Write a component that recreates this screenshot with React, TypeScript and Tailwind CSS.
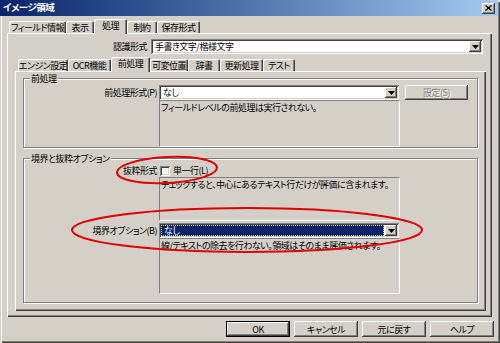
import React from "react";

const RAISED =
  "shadow-[inset_-1px_-1px_0_#404040,inset_1px_1px_0_#ffffff,inset_-2px_-2px_0_#808080]";
const SUNKEN =
  "shadow-[inset_1px_1px_0_#808080,inset_-1px_-1px_0_#ffffff,inset_2px_2px_0_#404040,inset_-2px_-2px_0_#d4d0c8]";

function DropBtn() {
  return (
    <div
      className={`w-[12px] h-[11px] shrink-0 bg-[#d4d0c8] flex items-center justify-center ${RAISED}`}
    >
      <svg width="7" height="4" viewBox="0 0 7 4">
        <path d="M0 0h7L3.5 4z" fill="#000" />
      </svg>
    </div>
  );
}

function Combo({
  text,
  cls,
  selected,
}: {
  text: string;
  cls: string;
  selected?: boolean;
}) {
  return (
    <div className={`h-[15px] shrink-0 flex items-stretch p-[2px] bg-white ${SUNKEN} ${cls}`}>
      {selected ? (
        <div className="flex-1 bg-[#0a246a] text-white flex items-center pl-[2px] mr-[1px] border border-dotted border-[#c8c0a0]">
          {text}
        </div>
      ) : (
        <div className="flex-1 flex items-center pl-[2px] whitespace-nowrap">{text}</div>
      )}
      <DropBtn />
    </div>
  );
}

function Tab({ label, cls, sel }: { label: string; cls: string; sel?: boolean }) {
  return sel ? (
    <div
      className={`h-[15px] -mb-px relative z-10 bg-[#d4d0c8] rounded-t-[2px] flex items-start justify-center pt-[2px] whitespace-nowrap shadow-[inset_1px_1px_0_#ffffff,inset_-1px_0_0_#404040,inset_-2px_0_0_#808080] ${cls}`}
    >
      {label}
    </div>
  ) : (
    <div
      className={`h-[12px] bg-[#d4d0c8] rounded-t-[2px] flex items-center justify-center whitespace-nowrap shadow-[inset_1px_1px_0_#ffffff,inset_-1px_0_0_#404040,inset_-2px_0_0_#808080] ${cls}`}
    >
      {label}
    </div>
  );
}

function Group({ title, children, cls }: { title: string; children: React.ReactNode; cls?: string }) {
  return (
    <div
      className={`border border-[#808080] shadow-[inset_1px_1px_0_#ffffff,1px_1px_0_#ffffff] ${cls ?? ""}`}
    >
      <div className="-mt-[6px] ml-[6px] w-fit px-[1px] h-[11px] leading-[11px] bg-[#d4d0c8] whitespace-nowrap">
        {title}
      </div>
      {children}
    </div>
  );
}

function TextBox({ text, cls }: { text: string; cls: string }) {
  return (
    <div
      className={`ml-[135px] w-[241px] border border-t-[#808080] border-l-[#808080] border-b-white border-r-white pl-[1px] pt-[1px] leading-[11px] whitespace-nowrap ${cls}`}
    >
      {text}
    </div>
  );
}

function Btn({ label, cls }: { label: string; cls?: string }) {
  return (
    <div
      className={`w-[64px] h-[16px] bg-[#d4d0c8] flex items-center justify-center ${RAISED} ${cls ?? ""}`}
    >
      {label}
    </div>
  );
}

export default function App() {
  return (
    <div className="w-[500px] h-[343px] relative overflow-hidden bg-[#d4d0c8] text-black text-[9px] leading-none font-['Noto_Sans_CJK_JP',sans-serif] [font-feature-settings:'palt'] tracking-[-0.5px] flex flex-col shadow-[inset_1px_1px_0_#d4d0c8,inset_2px_2px_0_#ffffff,inset_-1px_-1px_0_#404040,inset_-2px_-2px_0_#808080]">
      {/* title bar */}
      <div className="h-[16px] mr-[2px] shrink-0 bg-linear-to-r from-[#0a246a] to-[#a6caf0] flex items-center justify-between pl-[3px] pr-[3px]">
        <span className="text-white font-bold text-[9.5px]">イメージ領域</span>
        <div className={`w-[13px] h-[11px] bg-[#d4d0c8] flex items-center justify-center ${RAISED}`}>
          <svg width="7" height="6" viewBox="0 0 7 6">
            <path d="M0.5 0.5L6.5 5.5M6.5 0.5L0.5 5.5" stroke="#000" strokeWidth="1.4" />
          </svg>
        </div>
      </div>

      {/* outer tabs */}
      <div className="mt-[3px] ml-[9px] h-[14px] flex items-end shrink-0">
        <Tab label="フィールド情報" cls="w-[57px]" />
        <Tab label="表示" cls="w-[28px]" />
        <Tab label="処理" cls="w-[33px]" sel />
        <Tab label="制約" cls="w-[30px]" />
        <Tab label="保存形式" cls="w-[43px]" />
      </div>

      {/* outer panel */}
      <div className="ml-[7px] w-[485px] h-[284px] shrink-0 pt-[6px] pl-[8px] shadow-[inset_1px_1px_0_#ffffff,inset_-1px_-1px_0_#404040,inset_-2px_-2px_0_#808080]">
        <div className="flex items-center h-[15px]">
          <div className="w-[136px] text-right pr-[4px]">認識形式</div>
          <Combo text="手書き文字/楷様文字" cls="w-[332px]" />
        </div>

        {/* inner tabs */}
        <div className="mt-[3px] ml-[3px] h-[14px] flex items-end">
          <Tab label="エンジン設定" cls="w-[50px]" />
          <Tab label="OCR機能" cls="w-[43px]" />
          <Tab label="前処理" cls="w-[39px]" sel />
          <Tab label="可変位置" cls="w-[38px]" />
          <Tab label="辞書" cls="w-[32px]" />
          <Tab label="更新処理" cls="w-[43px]" />
          <Tab label="テスト" cls="w-[32px]" />
        </div>

        {/* inner panel */}
        <div className="w-[471px] h-[240px] pt-[7px] pl-[8px] shadow-[inset_1px_1px_0_#ffffff,inset_-1px_-1px_0_#404040,inset_-2px_-2px_0_#808080]">
          <Group title="前処理" cls="w-[455px]">
            <div className="mt-[1px] flex items-center h-[15px]">
              <div className="w-[135px] text-right pr-[2px] whitespace-nowrap">前処理形式(P)</div>
              <Combo text="なし" cls="w-[240px]" />
              <div className={`ml-[6px] w-[63px] h-[15px] bg-[#d4d0c8] flex items-center justify-center text-[#808080] [text-shadow:1px_1px_0_#ffffff] ${RAISED}`}>
                設定(S)
              </div>
            </div>
            <TextBox text="フィールドレベルの前処理は実行されない。" cls="h-[47px]" />
          </Group>

          <Group title="境界と抜粋オプション" cls="w-[455px] mt-[10px] pb-[8px]">
            <div className="flex items-center h-[13px]">
              <div className="w-[135px] text-right pr-[2px]">抜粋形式</div>
              <div className={`ml-[1px] w-[10px] h-[10px] bg-white ${SUNKEN}`} />
              <div className="ml-[3px]">単一行(L)</div>
            </div>
            <TextBox text="チェックすると、中心にあるテキスト行だけが評価に含まれます。" cls="h-[44px]" />
            <div className="mt-[2px] flex items-center h-[15px]">
              <div className="w-[135px] text-right pr-[2px] whitespace-nowrap">境界オプション(B)</div>
              <Combo text="なし" cls="w-[240px]" selected />
            </div>
            <TextBox text="線/テキストの除去を行わない。領域はそのまま評価されます。" cls="h-[56px]" />
          </Group>
        </div>
      </div>

      {/* buttons */}
      <div className="mt-[4px] pr-[6px] flex justify-end gap-[4px]">
        <Btn label="OK" cls="border border-black" />
        <Btn label="キャンセル" />
        <Btn label="元に戻す" />
        <Btn label="ヘルプ" />
      </div>

      {/* red annotation ellipses */}
      <svg
        className="absolute inset-0 pointer-events-none"
        width="500"
        height="343"
        viewBox="0 0 500 343"
      >
        <ellipse cx="167" cy="170" rx="50" ry="13" fill="none" stroke="#e00000" strokeWidth="2" transform="rotate(-3 167 170)" />
        <ellipse cx="247" cy="230" rx="175" ry="22" fill="none" stroke="#e00000" strokeWidth="2" />
      </svg>
    </div>
  );
}
